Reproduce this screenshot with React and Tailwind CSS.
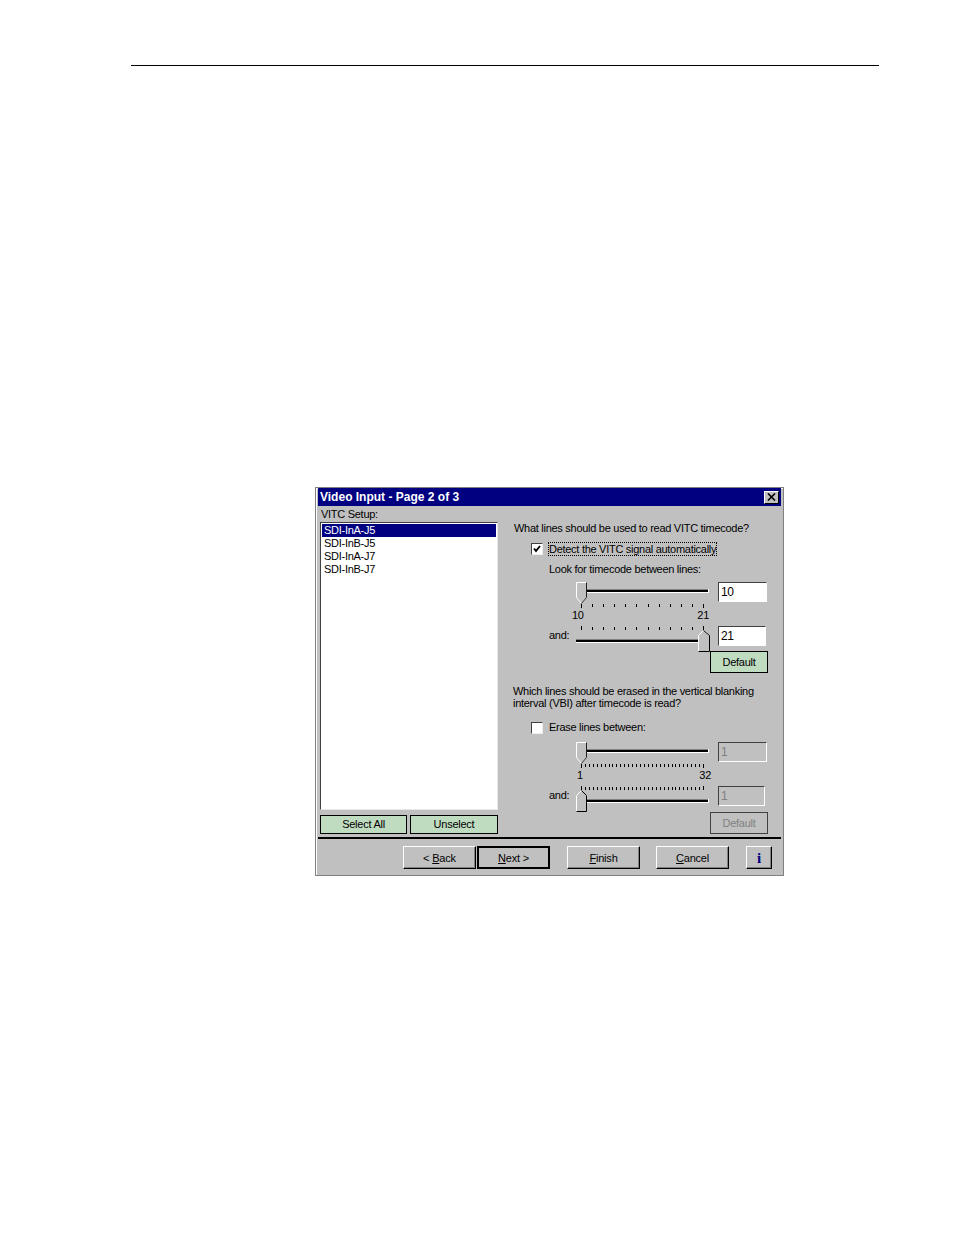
// App.jsx - Video Input wizard page, printed in a manual
const font = { fontFamily: '"Liberation Sans", Arial, sans-serif' };

const Slider = ({ ticks, up = false, right = false, disabled = false }) => {
    const tickTop = up ? 0 : 22;
    const thumbTop = up ? 4 : 0;
    const trackY = up ? 14 : 8;
    const thumbX = right ? 122 : 0;
    const w = right ? 11 : 10;
    const mid = thumbX + Math.floor(w / 2);
    const b = thumbTop + 21;
    const outline = up
        ? `M${thumbX} ${b} V${thumbTop + 5} L${mid} ${thumbTop} L${thumbX + w} ${thumbTop + 5} V${b} Z`
        : `M${thumbX} ${thumbTop} H${thumbX + w} V${b - 6} L${mid} ${b} L${thumbX} ${b - 6} Z`;
    const marks = [];
    for (let i = 0; i < ticks; i++) marks.push(5 + Math.round((i * 122) / (ticks - 1)));

    return (
        <svg width="134" height="26" className="block shrink-0">
            <defs>
                <pattern id="dither" width="2" height="2" patternUnits="userSpaceOnUse">
                    <rect width="2" height="2" fill="#ffffff" />
                    <rect width="1" height="1" fill="#808080" />
                    <rect x="1" y="1" width="1" height="1" fill="#808080" />
                </pattern>
            </defs>
            <rect x="0" y={trackY - 1} width="133" height="1" fill="#808080" />
            <rect x="0" y={trackY} width="133" height="2" fill="#000000" />
            <rect x="0" y={trackY + 2} width="133" height="1" fill="#ffffff" />
            <rect x="132" y={trackY - 1} width="1" height="4" fill="#ffffff" />
            {marks.map((x, i) => {
                const long = i === 0 || i === ticks - 1;
                return (
                    <rect
                        key={x}
                        x={x}
                        y={up && !long ? tickTop + 1 : tickTop}
                        width="1"
                        height={long ? 4 : 3}
                        fill="#000000"
                    />
                );
            })}
            <path d={outline} fill={disabled ? "url(#dither)" : "#c0c0c0"} stroke="#ffffff" transform="translate(0.5 0.5)" />
            {up ? (
                <path d={`M${thumbX} ${b} H${thumbX + w} V${thumbTop + 5} L${mid} ${thumbTop}`} fill="none" stroke="#000000" transform="translate(0.5 0.5)" />
            ) : (
                <path d={`M${thumbX + w} ${thumbTop} V${b - 6} L${mid} ${b}`} fill="none" stroke="#202020" transform="translate(0.5 0.5)" />
            )}
        </svg>
    );
};

const NumberBox = ({ value, disabled = false, width = "w-[49px]" }) => (
    <div
        className={`${width} h-[20px] ml-[8px] pl-[2px] text-[12px] leading-[18px] tracking-[-0.3px] border border-t-[#404040] border-l-[#404040] border-r-white border-b-white ${
            disabled ? "bg-[#c0c0c0] text-[#808080]" : "bg-white text-black"
        }`}
    >
        {value}
    </div>
);

const GreenButton = ({ children, className = "", disabled = false }) => (
    <div
        className={`flex items-center justify-center border text-[11px] tracking-[-0.25px] ${
            disabled ? "bg-[#c0c0c0] border-[#404040] text-[#808080]" : "bg-[#c0dcc0] border-black text-black"
        } ${className}`}
    >
        {children}
    </div>
);

const NavButton = ({ children, className = "", isDefault = false }) => (
    <div
        className={`flex items-center justify-center h-[23px] pt-px text-[11px] tracking-[-0.2px] text-black bg-[#c0c0c0] ${
            isDefault
                ? "border-2 border-t-black border-l-black border-r-black border-b-black"
                : "border border-t-white border-l-white border-r-black border-b-black shadow-[inset_-1px_-1px_0_#808080]"
        } ${className}`}
    >
        {children}
    </div>
);

const Checkbox = ({ checked = false }) => (
    <div className="w-[12px] h-[12px] bg-white border border-t-[#404040] border-l-[#404040] border-r-[#eeeeee] border-b-[#eeeeee] shrink-0">
        {checked && (
            <svg width="10" height="10" className="block">
                <path d="M2 4.5 L4 7 L8 2" fill="none" stroke="#000000" strokeWidth="2" />
            </svg>
        )}
    </div>
);

const items = ["SDI-InA-J5", "SDI-InB-J5", "SDI-InA-J7", "SDI-InB-J7"];

const App = () => {
    return (
        <div className="bg-white min-h-[1235px] w-full pt-[65px]" style={font}>
            <div className="ml-[131px] w-[748px] h-px bg-black" />

            <div className="ml-[315px] mt-[421px] w-[469px] h-[389px] bg-[#c0c0c0] border border-[#808080] shadow-[inset_1px_1px_0_#ffffff] px-px pb-px flex flex-col">
                {/* title bar */}
                <div className="h-[18px] mx-px bg-[#000080] flex items-center justify-between pl-[2px] pr-[2px]">
                    <span className="text-white text-[12px] font-bold">Video Input - Page 2 of 3</span>
                    <div className="w-[15px] h-[13px] bg-[#c0c0c0] border border-t-white border-l-white border-r-black border-b-black flex items-center justify-center">
                        <svg width="9" height="8" className="block">
                            <path d="M1 0.5 L8 7.5 M8 0.5 L1 7.5" stroke="#000000" strokeWidth="1.6" />
                        </svg>
                    </div>
                </div>

                {/* body */}
                <div className="flex h-[331px] tracking-[-0.28px]">
                    {/* list side */}
                    <div className="w-[195px] pl-[3px] shrink-0 flex flex-col">
                        <div className="h-[13px] mt-[2px] pl-px text-[11px] leading-[13px] text-black">VITC Setup:</div>
                        <div className="w-[178px] h-[288px] mt-[1px] bg-white border border-t-[#404040] border-l-[#404040] border-r-[#e8e8e8] border-b-[#e8e8e8] p-px">
                            {items.map((item, i) => (
                                <div
                                    key={item}
                                    className={`h-[13px] last:h-[12px] pl-[2px] text-[11px] leading-[13px] ${
                                        i === 0 ? "bg-[#000080] text-white" : "text-black"
                                    }`}
                                >
                                    {item}
                                </div>
                            ))}
                        </div>
                        <div className="flex gap-[3px] mt-[5px]">
                            <GreenButton className="w-[87px] h-[19px]">Select All</GreenButton>
                            <GreenButton className="w-[88px] h-[19px]">Unselect</GreenButton>
                        </div>
                    </div>

                    {/* options side */}
                    <div className="flex-1 pl-[1px] flex flex-col text-[11px] text-black">
                        <div className="h-[13px] mt-[16px] ml-px leading-[13px]">What lines should be used to read VITC timecode?</div>
                        <div className="flex items-center h-[14px] mt-[7px] ml-[18px]">
                            <Checkbox checked />
                            <span className="ml-[5px] w-[169px] h-[14px] leading-[12px] border border-dotted border-black whitespace-nowrap">
                                Detect the VITC signal automatically
                            </span>
                        </div>
                        <div className="h-[13px] mt-[7px] ml-[36px] leading-[13px]">Look for timecode between lines:</div>
                        <div className="flex items-start mt-[6px] ml-[63px]">
                            <Slider ticks={12} />
                            <NumberBox value="10" />
                        </div>
                        <div className="flex justify-between h-[13px] mt-[1px] ml-[59px] w-[137px] leading-[13px]">
                            <span>10</span>
                            <span>21</span>
                        </div>
                        <div className="flex items-start h-[25px] mt-[4px] ml-[36px]">
                            <span className="w-[27px] mt-[3px] leading-[13px]">and:</span>
                            <Slider ticks={12} up right />
                            <NumberBox value="21" width="w-[48px]" />
                        </div>
                        <div className="flex justify-end pr-[14px]">
                            <GreenButton className="w-[58px] h-[22px]">Default</GreenButton>
                        </div>

                        <div className="mt-[12px] leading-[12px] w-[260px] whitespace-nowrap">
                            Which lines should be erased in the vertical blanking
                            <br />
                            interval (VBI) after timecode is read?
                        </div>
                        <div className="flex items-center h-[13px] mt-[12px] ml-[18px]">
                            <Checkbox />
                            <span className="ml-[6px] leading-[13px]">Erase lines between:</span>
                        </div>
                        <div className="flex items-start mt-[8px] ml-[63px]">
                            <Slider ticks={32} disabled />
                            <NumberBox value="1" disabled />
                        </div>
                        <div className="flex justify-between h-[13px] mt-[1px] ml-[64px] w-[134px] leading-[13px]">
                            <span>1</span>
                            <span>32</span>
                        </div>
                        <div className="flex items-start h-[26px] mt-[4px] ml-[36px]">
                            <span className="w-[27px] mt-[3px] leading-[13px]">and:</span>
                            <Slider ticks={32} up disabled />
                            <NumberBox value="1" disabled width="w-[47px]" />
                        </div>
                        <div className="flex justify-end pr-[14px]">
                            <GreenButton className="w-[58px] h-[22px]" disabled>Default</GreenButton>
                        </div>
                    </div>
                </div>

                <div className="h-[2px] mx-px bg-black" />

                {/* footer */}
                <div className="flex items-start pt-[7px] pl-[86px]">
                    <NavButton className="w-[73px]">&lt;&nbsp;<u>B</u>ack</NavButton>
                    <NavButton className="w-[73px] ml-px" isDefault><u>N</u>ext &gt;</NavButton>
                    <NavButton className="w-[73px] ml-[17px]"><u>F</u>inish</NavButton>
                    <NavButton className="w-[73px] ml-[16px]"><u>C</u>ancel</NavButton>
                    <NavButton className="w-[26px] ml-[17px]">
                        <span className="text-[#000080] font-bold text-[15px] leading-none" style={{ fontFamily: '"Liberation Serif", serif' }}>i</span>
                    </NavButton>
                </div>
            </div>
        </div>
    );
};

export default App;
